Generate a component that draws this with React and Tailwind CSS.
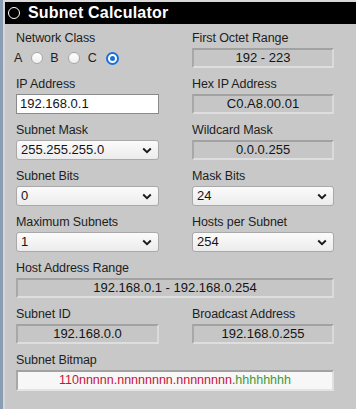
import React from "react";

const font = { fontFamily: '"Liberation Sans", Arial, sans-serif' };

function Label({ children }) {
  return (
    <div className="h-[16px] leading-[16px] text-[12.5px] text-[#1e1e1e] tracking-[-0.1px] whitespace-nowrap">
      {children}
    </div>
  );
}

function ReadBox({ children, className = "" }) {
  return (
    <div
      className={
        "h-[20px] flex items-center justify-center text-[13px] text-[#141414] bg-[#c6c6c6] border-2 border-t-[#a2a2a2] border-l-[#a8a8a8] border-b-[#dedede] border-r-[#dadada] " +
        className
      }
    >
      {children}
    </div>
  );
}

function Chevron() {
  return (
    <svg width="10" height="7" viewBox="0 0 10 7" className="shrink-0">
      <path d="M1.2 1.5 L5 5.2 L8.8 1.5" fill="none" stroke="#1a1a1a" strokeWidth="1.9" />
    </svg>
  );
}

function Select({ value }) {
  return (
    <div className="h-[20px] flex items-center justify-between pl-[4px] pr-[6px] text-[13px] text-[#141414] bg-gradient-to-b from-[#fbfbfb] to-[#ececec] border border-[#a9a9a9] rounded-[3px]">
      <span>{value}</span>
      <Chevron />
    </div>
  );
}

function Field({ label, children }) {
  return (
    <div className="flex flex-col gap-[2px]">
      <Label>{label}</Label>
      {children}
    </div>
  );
}

function Radio({ checked, className = "" }) {
  if (checked) {
    return (
      <div className={"w-[13px] h-[13px] rounded-full bg-white border-[2px] border-[#1c6fd6] flex items-center justify-center " + className}>
        <div className="w-[5px] h-[5px] rounded-full bg-[#1c6fd6]" />
      </div>
    );
  }
  return <div className={"w-[12px] h-[12px] rounded-full bg-gradient-to-b from-white to-[#f0f0f0] border border-[#a8a8a8] " + className} />;
}

export default function App() {
  return (
    <div className="w-[356px] h-[409px] flex overflow-hidden bg-[#c8c8c8]" style={font}>
      <div className="w-[3px] bg-[#8a9db5]" />
      <div className="w-[2px] bg-[#d6d6d6]" />
      <div className="flex-1 flex flex-col">
        <div className="h-[2px] bg-[#d8d8d8]" />
        <div className="h-[22px] bg-black flex items-center pl-[3px] gap-[8px]">
          <div className="w-[12px] h-[12px] rounded-full border-[1.5px] border-white" />
          <span className="text-white font-bold text-[16px] tracking-[0.2px] leading-none">
            Subnet Calculator
          </span>
        </div>
        <div className="pt-[6px] pl-[11px] grid grid-cols-[143px_142px] gap-x-[33px] gap-y-[8px]">
          <div className="flex flex-col gap-[2px]">
            <Label>Network Class</Label>
            <div className="h-[20px] flex items-center text-[12.5px] text-[#1e1e1e] -ml-[2px]">
              <span>A</span>
              <Radio className="ml-[9px]" />
              <span className="ml-[7px]">B</span>
              <Radio className="ml-[9px]" />
              <span className="ml-[8px]">C</span>
              <Radio checked className="ml-[9px]" />
            </div>
          </div>
          <Field label="First Octet Range">
            <ReadBox>192 - 223</ReadBox>
          </Field>

          <Field label="IP Address">
            <div className="h-[20px] flex items-center pl-[3px] text-[13px] text-[#141414] bg-white border border-[#8a8a8a]">
              192.168.0.1
            </div>
          </Field>
          <Field label="Hex IP Address">
            <ReadBox>C0.A8.00.01</ReadBox>
          </Field>

          <Field label="Subnet Mask">
            <Select value="255.255.255.0" />
          </Field>
          <Field label="Wildcard Mask">
            <ReadBox>0.0.0.255</ReadBox>
          </Field>

          <Field label="Subnet Bits">
            <Select value="0" />
          </Field>
          <Field label="Mask Bits">
            <Select value="24" />
          </Field>

          <Field label="Maximum Subnets">
            <Select value="1" />
          </Field>
          <Field label="Hosts per Subnet">
            <Select value="254" />
          </Field>

          <div className="col-span-2">
            <Field label="Host Address Range">
              <ReadBox>192.168.0.1 - 192.168.0.254</ReadBox>
            </Field>
          </div>

          <Field label="Subnet ID">
            <ReadBox>192.168.0.0</ReadBox>
          </Field>
          <Field label="Broadcast Address">
            <ReadBox>192.168.0.255</ReadBox>
          </Field>

          <div className="col-span-2">
            <Field label="Subnet Bitmap">
              <div className="h-[21px] flex items-center justify-center text-[12.5px] bg-[#f7f7f7] border-2 border-t-[#a2a2a2] border-l-[#a8a8a8] border-b-[#e4e4e4] border-r-[#e0e0e0]">
                <span className="text-[#c8143c]">110nnnnn.nnnnnnnn.nnnnnnnn.</span>
                <span className="text-[#3c9a3c]">hhhhhhhh</span>
              </div>
            </Field>
          </div>
        </div>
      </div>
    </div>
  );
}
